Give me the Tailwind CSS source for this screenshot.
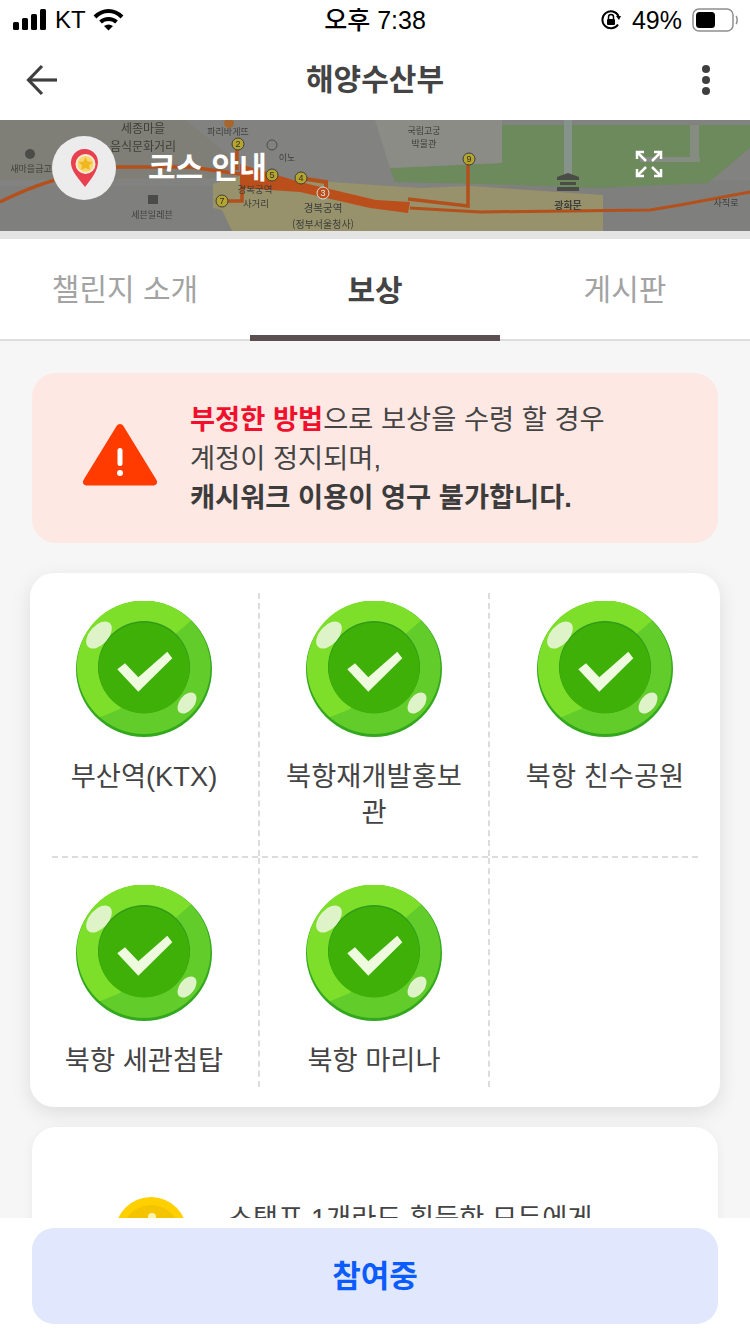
<!DOCTYPE html>
<html lang="ko">
<head>
  <meta charset="UTF-8">
  <meta name="viewport" content="width=device-width, initial-scale=1.0">
  <title>해양수산부</title>
  <script src="https://cdn.jsdelivr.net/npm/@tailwindcss/browser@4"></script>
</head>
<body class="bg-[#f6f6f6] font-['Liberation_Sans','Noto_Sans_CJK_KR',sans-serif]">
  <div class="relative w-[750px] h-[1334px] overflow-hidden bg-[#f6f6f6]">

    <!-- status bar -->
    <div class="relative h-[40px] bg-white text-black">
      <div class="flex items-center h-full pl-[13px]">
        <svg width="34" height="22" viewBox="0 0 34 22" fill="#000">
          <rect x="0" y="13" width="6" height="8" rx="1.5"/>
          <rect x="9" y="9" width="6" height="12" rx="1.5"/>
          <rect x="18" y="5" width="6" height="16" rx="1.5"/>
          <rect x="27" y="0" width="6" height="21" rx="1.5"/>
        </svg>
        <span class="ml-[8px] text-[24px] leading-none">KT</span>
        <svg class="ml-[7px]" width="31" height="22" viewBox="0 0 31 22" fill="none" stroke="#000" stroke-width="4">
          <path d="M2 8 C10 0 21 0 29 8"/>
          <path d="M7.500 13 C12 9 19 9 23.500 13"/>
          <path d="M11 17 L15.500 21.500 L20 17 C17 15 14 15 11 17Z" fill="#000" stroke="none"/>
        </svg>
      </div>
      <span class="absolute left-0 right-0 top-[4px] text-center text-[25px] leading-[32px] font-medium">오후 7:38</span>
      <div class="absolute right-[12px] top-0 h-full flex items-center">
        <svg width="22" height="22" viewBox="0 0 22 22" fill="none" stroke="#000" stroke-width="2">
          <path d="M18 15.500 A8.500 8.500 0 1 1 18.500 7"/>
          <path d="M16 7 L21 7 L19 11Z" fill="#000" stroke="none"/>
          <rect x="7" y="10" width="8" height="6" rx="1" fill="#000" stroke="none"/>
          <path d="M8.500 10 V8 a2.500 2.500 0 0 1 5 0 V10" stroke-width="1.500"/>
        </svg>
        <span class="ml-[10px] text-[25px] leading-none">49%</span>
        <svg class="ml-[10px]" width="46" height="24" viewBox="0 0 46 24" fill="none">
          <rect x="1" y="1" width="40" height="22" rx="6" stroke="#8e8e8e" stroke-width="1.500"/>
          <rect x="4" y="4" width="19" height="16" rx="3.500" fill="#000"/>
          <path d="M44 8 C45.500 9.500 45.500 14.500 44 16" stroke="#8e8e8e" stroke-width="1.500"/>
        </svg>
      </div>
    </div>

    <!-- header -->
    <div class="relative flex items-center justify-between h-[80px] bg-white pl-[26px] pr-[40px]">
      <svg width="32" height="32" viewBox="0 0 32 32" fill="none" stroke="#3f3f3f" stroke-width="3.200">
        <path d="M31 16 H3"/>
        <path d="M16 2 L2.500 16 L16 30"/>
      </svg>
      <h1 class="absolute left-0 right-0 text-center text-[30px] leading-[40px] font-bold text-[#444444]">해양수산부</h1>
      <div class="flex flex-col gap-[3px]">
        <span class="w-[8px] h-[8px] rounded-full bg-[#3f3f3f]"></span>
        <span class="w-[8px] h-[8px] rounded-full bg-[#3f3f3f]"></span>
        <span class="w-[8px] h-[8px] rounded-full bg-[#3f3f3f]"></span>
      </div>
    </div>

    <!-- map banner -->
    <div class="relative h-[111px] overflow-hidden bg-[#828280]">
      <svg class="absolute inset-0 blur-[0.5px]" width="750" height="111" viewBox="0 0 750 111">
        <rect width="750" height="111" fill="#828280"/>
        <path d="M0 0 H185 L235 40 V58 L0 60Z" fill="#7f7e77"/>
        <path d="M0 66 L240 66 L430 68 L750 60 V111 H0Z" fill="#7f7f7d"/>
        <path d="M213 64 L240 56 L420 68 L470 66 L603 75 V111 H232 L222 90 L213 88Z" fill="#97926c"/>
        <path d="M502 5 H750 V28 L708 63 L600 68 L480 64 L395 62 L390 48 L435 46 L502 43Z" fill="#6d8a5c"/>
        <path d="M564 0 H572 V55 H564Z" fill="#85938c"/>
        <path d="M640 37 H700 V42 H640Z" fill="#878c82"/>
        <path d="M690 5 H699 V37 H690Z" fill="#878c82"/>
        <path d="M375 0 H502 V43 L435 46 L390 48Z" fill="#8b8c85"/>
        <path d="M0 82 C40 62 60 58 110 47 L190 47 L240 54" fill="none" stroke="#b4501c" stroke-width="3.500"/>
        <path d="M240 44 L300 62 L376 80 L410 82 L408 93 L370 88 L300 72 L240 68Z" fill="#bb4f1c"/>
        <path d="M237 30 V50" stroke="#b4501c" stroke-width="3.500"/>
        <path d="M228 81 H242 V66" fill="none" stroke="#b4501c" stroke-width="3.500"/>
        <path d="M306 59 L326 62 V70" fill="none" stroke="#b4501c" stroke-width="4"/>
        <path d="M408 79 L468 86 V44" fill="none" stroke="#b4501c" stroke-width="3.500"/>
        <path d="M410 88 L480 92 L650 90 L680 85 L750 72" fill="none" stroke="#b4501c" stroke-width="3"/>
        <g fill="#3e3e3a" text-anchor="middle" font-family="'Noto Sans CJK KR'">
          <text x="143" y="13" font-size="12">세종마을</text>
          <text x="143" y="30.500" font-size="12">음식문화거리</text>
          <text x="31" y="52" font-size="9">새마을금고</text>
          <text x="152" y="98" font-size="9">세븐일레븐</text>
          <text x="228" y="15" font-size="9">파리바게뜨</text>
          <text x="255" y="73" font-size="9.500">경복궁역</text>
          <text x="256" y="87" font-size="9.500">사거리</text>
          <text x="323" y="92" font-size="10.500">경복궁역</text>
          <text x="323" y="107.500" font-size="10">(정부서울청사)</text>
          <text x="424" y="14" font-size="9">국립고궁</text>
          <text x="424" y="27" font-size="9">박물관</text>
          <text x="568" y="89" font-size="10" font-weight="700">광화문</text>
          <text x="726" y="86" font-size="9">사직로</text>
          <text x="287" y="41" font-size="9">이노</text>
        </g>
        <g fill="#4b4b48">
          <path d="M557 57 L568 53 L579 57 V60 H557Z"/><rect x="560" y="62" width="16" height="3"/><rect x="557" y="67" width="22" height="4"/>
          <rect x="148" y="75" width="10" height="9"/>
          <circle cx="30" cy="34" r="5"/>
        </g>
        <circle cx="229" cy="3" r="5" fill="#a5672e"/>
        <circle cx="272" cy="25" r="5" fill="none" stroke="#4b4b48"/>
        <g fill="#b5a52e" stroke="#3e3e3a">
          <circle cx="238" cy="24" r="6"/>
          <circle cx="222" cy="81" r="6"/>
          <circle cx="301" cy="58" r="6"/>
          <circle cx="272" cy="55" r="6"/>
          <circle cx="469" cy="39" r="6"/>
          <circle cx="323" cy="73" r="6" fill="#bb4f1c" stroke="#ddd"/>
        </g>
        <g font-size="9" fill="#2e2e2a" text-anchor="middle" font-family="'Liberation Sans'">
          <text x="238" y="27">2</text>
          <text x="222" y="84">7</text>
          <text x="301" y="61">4</text>
          <text x="272" y="58">5</text>
          <text x="469" y="42">9</text>
          <text x="323" y="76" fill="#e8e8e8">3</text>
        </g>
      </svg>
      <div class="absolute inset-0 flex items-center pb-[16px] pl-[52px] pr-[87px]">
        <span class="flex items-center justify-center w-[64px] h-[64px] rounded-full bg-[#ececec]">
          <svg width="27" height="38" viewBox="0 0 27 38">
            <path d="M14 38 C8 30 0 22 0 14 A13.500 13.500 0 0 1 27 13 C27 22 20 30 14 38Z" fill="#e8404f"/>
            <circle cx="14.500" cy="15" r="10" fill="#f7ecd2"/>
            <circle cx="14.500" cy="15" r="8" fill="#f6d873"/>
            <path d="M14.500 8 L16.500 12.500 L21.500 13 L18 16.500 L19 21 L14.500 19 L10 21 L11 16.500 L7.500 13 L12.500 12.500Z" fill="#f2b61f"/>
          </svg>
        </span>
        <span class="ml-[32px] text-[30px] leading-none font-bold text-white">코스 안내</span>
        <svg class="ml-auto mb-[8px]" width="28" height="28" viewBox="0 0 28 28" fill="none" stroke="#fff" stroke-width="2.500">
          <path d="M2 9 V2 H9"/><path d="M2 2 L11 11"/>
          <path d="M19 2 H26 V9"/><path d="M26 2 L17 11"/>
          <path d="M2 19 V26 H9"/><path d="M2 26 L11 17"/>
          <path d="M19 26 H26 V19"/><path d="M26 26 L17 17"/>
        </svg>
      </div>
    </div>
    <div class="h-[8px] bg-[#e4e4e4]"></div>

    <!-- tabs -->
    <div class="flex h-[102px] bg-white border-b-2 border-[#dddddd]">
      <div class="flex-1 flex items-center justify-center text-[30px] text-[#a3a3a3]">챌린지 소개</div>
      <div class="flex-1 flex items-center justify-center pt-[6px] h-[102px] text-[30px] font-bold text-[#444444] border-b-[6px] border-[#5b4f52]">보상</div>
      <div class="flex-1 flex items-center justify-center text-[30px] text-[#a3a3a3]">게시판</div>
    </div>

    <!-- warning -->
    <div class="flex items-center mx-[32px] mt-[32px] h-[170px] rounded-[24px] bg-[#fee8e3] pl-[50px]">
      <svg class="mb-[8px]" width="76" height="64" viewBox="0 0 76 64">
        <path d="M38 2 a4 4 0 0 1 3.400 2 L74.500 58 a3.500 3.500 0 0 1 -3 5.500 H4.500 a3.500 3.500 0 0 1 -3 -5.500 L34.600 4 a4 4 0 0 1 3.400 -2Z" fill="#ff3b00"/>
        <rect x="35.500" y="26" width="5" height="18" rx="2.500" fill="#fff"/>
        <circle cx="38" cy="51" r="3" fill="#fff"/>
      </svg>
      <p class="ml-[32px] text-[27.3px] leading-[39px] text-[#444444]">
        <strong class="font-bold text-[#f0102d]">부정한 방법</strong>으로 보상을 수령 할 경우<br>
        계정이 정지되며,<br>
        <strong class="font-bold text-[#3c3c3c]">캐시워크 이용이 영구 불가합니다.</strong>
      </p>
    </div>

    <!-- stamps -->
    <div class="mx-[30px] mt-[30px] py-[20px] rounded-[24px] bg-white shadow-[0_6px_20px_rgba(0,0,0,0.1)] text-center text-[27.3px] leading-[36px] text-[#444444]">
      <div class="flex h-[263px]">
        <div class="w-[230px] pt-[8px] border-r-2 border-dashed border-[#dcdcdc]">
          <svg class="mx-auto" width="136" height="136" viewBox="0 0 136 136">
            <circle cx="68" cy="68" r="68" fill="#33a81f"/>
            <circle cx="68" cy="66.500" r="66.500" fill="#62cc2a"/>
            <path d="M115.020 19.480 A66.500 66.500 0 1 0 23.900 116.200 L44 108 L96 36Z" fill="#7ddf2a"/>
            <circle cx="68" cy="66" r="46" fill="#2f9a1d"/>
            <circle cx="68" cy="67" r="45.500" fill="#3fb007"/>
            <ellipse cx="23" cy="34" rx="16" ry="9.500" transform="rotate(-48 23 34)" fill="#dff3c9"/>
            <ellipse cx="111" cy="102" rx="12" ry="7.500" transform="rotate(-52 111 102)" fill="#dff3c9"/>
            <path d="M41.300 68.300 L49 62.300 L62.300 76.300 L91.300 50.700 L96.300 57.300 L62.300 90.700Z" fill="#effbdf"/>
          </svg>
          <p class="mt-[22px] px-[20px]">부산역(KTX)</p>
        </div>
        <div class="w-[230px] pt-[8px] border-r-2 border-dashed border-[#dcdcdc]">
          <svg class="mx-auto" width="136" height="136" viewBox="0 0 136 136">
            <circle cx="68" cy="68" r="68" fill="#33a81f"/>
            <circle cx="68" cy="66.500" r="66.500" fill="#62cc2a"/>
            <path d="M115.020 19.480 A66.500 66.500 0 1 0 23.900 116.200 L44 108 L96 36Z" fill="#7ddf2a"/>
            <circle cx="68" cy="66" r="46" fill="#2f9a1d"/>
            <circle cx="68" cy="67" r="45.500" fill="#3fb007"/>
            <ellipse cx="23" cy="34" rx="16" ry="9.500" transform="rotate(-48 23 34)" fill="#dff3c9"/>
            <ellipse cx="111" cy="102" rx="12" ry="7.500" transform="rotate(-52 111 102)" fill="#dff3c9"/>
            <path d="M41.300 68.300 L49 62.300 L62.300 76.300 L91.300 50.700 L96.300 57.300 L62.300 90.700Z" fill="#effbdf"/>
          </svg>
          <p class="mt-[22px] px-[20px]">북항재개발홍보관</p>
        </div>
        <div class="w-[230px] pt-[8px]">
          <svg class="mx-auto" width="136" height="136" viewBox="0 0 136 136">
            <circle cx="68" cy="68" r="68" fill="#33a81f"/>
            <circle cx="68" cy="66.500" r="66.500" fill="#62cc2a"/>
            <path d="M115.020 19.480 A66.500 66.500 0 1 0 23.900 116.200 L44 108 L96 36Z" fill="#7ddf2a"/>
            <circle cx="68" cy="66" r="46" fill="#2f9a1d"/>
            <circle cx="68" cy="67" r="45.500" fill="#3fb007"/>
            <ellipse cx="23" cy="34" rx="16" ry="9.500" transform="rotate(-48 23 34)" fill="#dff3c9"/>
            <ellipse cx="111" cy="102" rx="12" ry="7.500" transform="rotate(-52 111 102)" fill="#dff3c9"/>
            <path d="M41.300 68.300 L49 62.300 L62.300 76.300 L91.300 50.700 L96.300 57.300 L62.300 90.700Z" fill="#effbdf"/>
          </svg>
          <p class="mt-[22px] px-[20px]">북항 친수공원</p>
        </div>
      </div>
      <div class="mx-[22px] border-t-2 border-dashed border-[#dcdcdc]"></div>
      <div class="flex h-[229px]">
        <div class="w-[230px] pt-[27px] border-r-2 border-dashed border-[#dcdcdc]">
          <svg class="mx-auto" width="136" height="136" viewBox="0 0 136 136">
            <circle cx="68" cy="68" r="68" fill="#33a81f"/>
            <circle cx="68" cy="66.500" r="66.500" fill="#62cc2a"/>
            <path d="M115.020 19.480 A66.500 66.500 0 1 0 23.900 116.200 L44 108 L96 36Z" fill="#7ddf2a"/>
            <circle cx="68" cy="66" r="46" fill="#2f9a1d"/>
            <circle cx="68" cy="67" r="45.500" fill="#3fb007"/>
            <ellipse cx="23" cy="34" rx="16" ry="9.500" transform="rotate(-48 23 34)" fill="#dff3c9"/>
            <ellipse cx="111" cy="102" rx="12" ry="7.500" transform="rotate(-52 111 102)" fill="#dff3c9"/>
            <path d="M41.300 68.300 L49 62.300 L62.300 76.300 L91.300 50.700 L96.300 57.300 L62.300 90.700Z" fill="#effbdf"/>
          </svg>
          <p class="mt-[22px] px-[20px]">북항 세관첨탑</p>
        </div>
        <div class="w-[230px] pt-[27px] border-r-2 border-dashed border-[#dcdcdc]">
          <svg class="mx-auto" width="136" height="136" viewBox="0 0 136 136">
            <circle cx="68" cy="68" r="68" fill="#33a81f"/>
            <circle cx="68" cy="66.500" r="66.500" fill="#62cc2a"/>
            <path d="M115.020 19.480 A66.500 66.500 0 1 0 23.900 116.200 L44 108 L96 36Z" fill="#7ddf2a"/>
            <circle cx="68" cy="66" r="46" fill="#2f9a1d"/>
            <circle cx="68" cy="67" r="45.500" fill="#3fb007"/>
            <ellipse cx="23" cy="34" rx="16" ry="9.500" transform="rotate(-48 23 34)" fill="#dff3c9"/>
            <ellipse cx="111" cy="102" rx="12" ry="7.500" transform="rotate(-52 111 102)" fill="#dff3c9"/>
            <path d="M41.300 68.300 L49 62.300 L62.300 76.300 L91.300 50.700 L96.300 57.300 L62.300 90.700Z" fill="#effbdf"/>
          </svg>
          <p class="mt-[22px] px-[20px]">북항 마리나</p>
        </div>
        <div class="w-[230px]"></div>
      </div>
    </div>

    <!-- reward card, cut off by the bottom bar -->
    <div class="flex items-start mx-[32px] mt-[20px] h-[200px] pt-[70px] pl-[83px] rounded-[24px] bg-white shadow-[0_2px_12px_rgba(0,0,0,0.05)]">
      <svg width="72" height="72" viewBox="0 0 72 72">
        <circle cx="36" cy="36" r="36" fill="#ffd000"/>
        <circle cx="36" cy="37" r="29" fill="#f5c400"/>
        <circle cx="37" cy="20" r="4" fill="#fff3b0"/>
      </svg>
      <p class="ml-[41px] pt-[4px] text-[27.3px] leading-[36px] text-[#444444]">스탬프 1개라도 획득한 모두에게</p>
    </div>

    <!-- bottom bar -->
    <div class="absolute left-0 right-0 bottom-0 h-[116px] bg-white px-[32px] pt-[10px]">
      <button class="w-full h-[96px] pt-[3px] rounded-[22px] bg-[#e1e8fd] text-[31px] font-bold text-[#0b5cff]">참여중</button>
    </div>
  </div>
</body>
</html>
